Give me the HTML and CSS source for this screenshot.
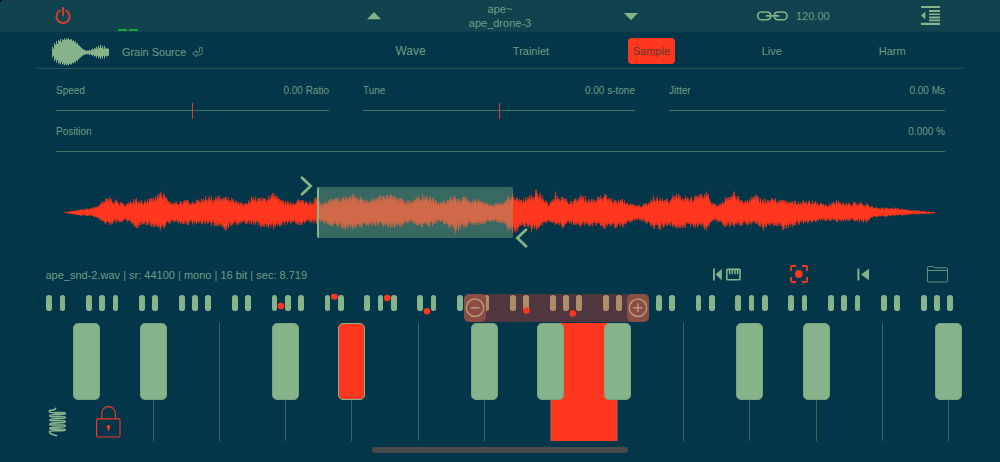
FILE: index.html
```
<!DOCTYPE html>
<html lang="en">
<head>

    <meta charset="utf-8">

    <title>Grain Source</title>

    <link rel="stylesheet" href="styles.css">

</head>
<body>

    <header class="topbar">
        <svg class="power" width="16" height="18" viewBox="0 0 16 18">
            <path d="M5 3.6A6.6 6.6 0 1 0 11 3.6M8 0.5V8.3"/>
        </svg>
        <div class="meter"><i></i><i></i></div>
        <svg class="prev" width="14" height="8" viewBox="0 0 14 8"><path d="M0 7.2L7 0L14 7.2Z"/></svg>
        <div class="preset">ape~<br>ape_drone-3</div>
        <svg class="next" width="14" height="8" viewBox="0 0 14 8"><path d="M0 0H14L7 7.2Z"/></svg>
        <svg class="link" width="31" height="10" viewBox="0 0 31 10">
            <path d="M13.5 3.2C13 1.6 11.6 1 10 1H4.6A3.8 3.8 0 0 0 4.6 8.8H10C11.6 8.8 13 8 13.5 6.6M17.5 3.2C18 1.6 19.4 1 21 1H26.2A3.8 3.8 0 0 1 26.2 8.8H21C19.4 8.8 18 8 17.5 6.6M9.5 4.9H21.5"/>
        </svg>
        <div class="tempo">120.00</div>
        <svg class="menu" width="19" height="19" viewBox="0 0 19 19">
            <path d="M0 0H19V2H0ZM8 4.1H19V6.1H8ZM8 7.4H19V9.1H8ZM8 10.5H19V12.4H8ZM8 13.6H19V15.2H8ZM0 16.8H19V19H0ZM0 9.4L4.3 5.7V13.3Z"/>
        </svg>
    </header>

    <nav class="tabs">
        <svg class="source-icon" id="source_icon" width="58" height="28" viewBox="0 0 58 28"></svg>
        <div class="source">Grain Source
            <svg width="11" height="11" viewBox="0 0 11 11">
                <path d="M7.6 0.6H10.2V5.4Q10.2 7.8 7.8 7.8H4.6V9.8L0.6 6.6L4.6 3.6V5.4H6.6Q7.6 5.4 7.6 4.4Z"/>
            </svg>
        </div>
        <div class="tab-list">
            <span class="wave">Wave</span>
            <span>Trainlet</span>
            <span class="active"><b>Sample</b></span>
            <span>Live</span>
            <span>Harm</span>
        </div>
    </nav>

    <section class="params">
        <div class="param">
            <div class="label"><span>Speed</span><span>0.00 Ratio</span></div>
            <div class="track"><i></i></div>
        </div>
        <div class="param">
            <div class="label"><span>Tune</span><span>0.00 s-tone</span></div>
            <div class="track"><i></i></div>
        </div>
        <div class="param">
            <div class="label"><span>Jitter</span><span>0.00 Ms</span></div>
            <div class="track"></div>
        </div>
        <div class="param wide">
            <div class="label"><span>Position</span><span>0.000 %</span></div>
            <div class="track"></div>
        </div>
    </section>

    <section class="sample">
        <svg id="waveform" width="1000" height="84" viewBox="0 171 1000 84"></svg>
        <div class="selection"></div>
        <svg class="handle start" width="13" height="20" viewBox="0 0 13 20"><path d="M2 1.8L10.6 10L2 18.2"/></svg>
        <svg class="handle end" width="13" height="20" viewBox="0 0 13 20"><path d="M11 1.8L2.4 10L11 18.2"/></svg>
    </section>

    <section class="info">
        <div class="file">ape_snd-2.wav | sr: 44100 | mono | 16 bit | sec: 8.719</div>
        <svg class="key-start" width="28" height="13" viewBox="0 0 28 13">
            <path d="M0 0.5H1.8V12.5H0ZM8.8 0.8V12.2L2.6 6.5Z"/>
            <path fill-rule="evenodd" d="M14.6 0.5H26.2Q27.8 0.5 27.8 2V11Q27.8 12.5 26.2 12.5H14.6Q13 12.5 13 11V2Q13 0.5 14.6 0.5ZM14.6 2.2V10.9H26.2V2.2H25.3V6.3H23.8V2.2H22.7V6.3H21.2V2.2H20V6.3H18.5V2.2H17.4V6.3H15.9V2.2Z"/>
        </svg>
        <svg class="record" width="18" height="18" viewBox="0 0 18 18">
            <path d="M1 6V2.2Q1 1 2.2 1H6M12 1H15.8Q17 1 17 2.2V6M17 12V15.8Q17 17 15.8 17H12M6 17H2.2Q1 17 1 15.8V12"/>
            <circle cx="8.8" cy="9" r="3.9"/>
        </svg>
        <svg class="to-start" width="13" height="13" viewBox="0 0 13 13">
            <path d="M0.4 0.5H2.4V12.5H0.4ZM12 0.8V12.2L4 6.5Z"/>
        </svg>
        <svg class="folder" width="22" height="17" viewBox="0 0 22 17">
            <path d="M0.5 15V1.5Q0.5 0.5 1.5 0.5H6.3L8 1.8H19.5Q20.5 1.8 20.5 2.8V15Q20.5 16 19.5 16H1.5Q0.5 16 0.5 15ZM0.5 4.5H20.5"/>
        </svg>
    </section>

    <section class="minimap">
        <div class="pills" id="pills"></div>
        <div class="range">
            <svg width="22" height="27" viewBox="0 0 22 27"><circle cx="11" cy="13.5" r="8.7"/><path d="M6.4 13.5H15.6"/></svg>
            <svg width="22" height="27" viewBox="0 0 22 27"><circle cx="11" cy="13.5" r="8.7"/><path d="M6.4 13.5H15.6M11 8.9V18.1"/></svg>
        </div>
        <svg class="notes" id="notes" width="1000" height="28" viewBox="0 294 1000 28"></svg>
    </section>

    <section class="keyboard" id="keyboard">
        <svg class="spring" width="20" height="30" viewBox="0 0 20 30">
            <path d="M7.6 1.2Q7.2 3.4 3.8 3.3Q0.8 3 1.4 4.8C2 7 16 4.3 17.4 6.2C18 8.3 2 6.5 1.8 8.8C1.8 11 17.2 8.3 17.4 10.4C17.4 12.4 1.8 10.8 1.8 12.9C1.8 15 17.4 12.5 17.4 14.7C17.4 16.8 1.8 15 1.8 17.2C1.8 19.3 17.4 16.8 17.4 18.9C17.4 21 1.8 19.2 1.8 21.2C1.8 23.3 17.2 21 17.4 22.8C16.8 24.8 3.4 22.8 1.6 24.3C0.8 27 5 27.8 8.6 28.6"/>
        </svg>
        <svg class="lock" width="25" height="32" viewBox="0 0 25 32">
            <path d="M2 12.8H22.6Q24 12.8 24 14.2V29.6Q24 31 22.6 31H2Q0.6 31 0.6 29.6V14.2Q0.6 12.8 2 12.8ZM5.8 12.6V7.6A6.6 6.8 0 0 1 19.4 7.6V12.6"/>
            <path class="hole" d="M12.5 19A1.8 1.8 0 0 1 13.4 22.4L13 25H12L11.6 22.4A1.8 1.8 0 0 1 12.5 19Z"/>
        </svg>
    </section>

    <div class="home"></div>

    <script src="script.js"></script>

</body>
</html>
```

FILE: styles.css
```
html, body {
    width: 1000px;
    height: 462px;
    margin: 0;
    overflow: hidden;
}
html {
    background: #000;
}
body {
    display: flex;
    flex-direction: column;
    border-top-left-radius: 4px;
    background: #033649;
    color: #6f9d83;
    font-family: "Liberation Sans", Helvetica, Arial, sans-serif;
    font-size: 11px;
    line-height: 14px;
}
svg {
    display: block;
    flex: none;
    fill: none;
}

/* top bar */
.topbar {
    display: flex;
    align-items: center;
    box-sizing: border-box;
    height: 32px;
    padding-left: 54px;
    background: #11434f;
    border-bottom: 1px solid #0d404e;
    border-top-left-radius: 4px;
    flex: none;
}
.power {
    margin-left: 0.6px;
    stroke: #f03a28;
    stroke-width: 1.7;
    stroke-linecap: round;
}
.meter {
    display: flex;
    gap: 2px;
    align-self: flex-end;
    width: 21px;
    margin-left: 47.4px;
}
.meter i {
    width: 9px;
    height: 2px;
    background: #16a52e;
}
.prev, .next, .menu, .key-start, .to-start {
    fill: #87b38a;
}
.prev {
    margin-left: 228px;
}
.preset {
    width: 120px;
    margin: 1px 0 0 59px;
    text-align: center;
}
.next {
    margin: 2px 0 0 64px;
}
.link {
    margin-left: 119px;
    stroke: #87b38a;
    stroke-width: 1.6;
    stroke-linecap: round;
}
.tempo {
    width: 36px;
    margin: 1px 0 0 8px;
}
.menu {
    margin-left: 89px;
}

/* source tabs */
.tabs {
    display: flex;
    align-items: center;
    box-sizing: border-box;
    height: 37px;
    margin: 0 37px;
    padding: 4px 0 0 15px;
    border-bottom: 1px solid #245752;
    flex: none;
}
.source-icon {
    stroke: #87b38a;
}
.source {
    display: flex;
    gap: 6px;
    align-items: center;
    width: 200px;
    margin: 0 0 0 12px;
    letter-spacing: -0.05px;
}
.source svg {
    stroke: #6f9d83;
    stroke-width: 0.8;
}
.tab-list {
    display: grid;
    grid-template-columns: repeat(5, 120.4px);
    margin: -2px 0 0 28.4px;
    text-align: center;
    align-items: center;
}
.tab-list .wave {
    font-size: 12px;
}
.tab-list b {
    display: inline-block;
    width: 47px;
    border-radius: 4px;
    background: #ff371e;
    color: #5f3634;
    font-weight: normal;
    line-height: 26px;
}

/* parameters */
.params {
    display: grid;
    grid-template-columns: 273px 272px 276px;
    align-content: start;
    justify-content: space-between;
    row-gap: 13px;
    height: 87px;
    padding: 14px 55px 0 56px;
    font-size: 10px;
    flex: none;
}
.params .wide {
    grid-column: 1 / 4;
}
.label {
    display: flex;
    justify-content: space-between;
    padding-top: 1px;
}
.track {
    display: flex;
    align-items: center;
    justify-content: center;
    height: 1px;
    margin-top: 12px;
    background: #41735f;
}
.track i {
    width: 1px;
    height: 16px;
    background: #e8392a;
    flex: none;
}

/* waveform */
.sample {
    position: relative;
    margin-top: 1px;
    height: 84px;
    flex: none;
}
#waveform {
    stroke: #ff371e;
}
.selection {
    position: absolute;
    box-sizing: border-box;
    left: 317px;
    top: 16px;
    width: 196px;
    height: 51px;
    border-left: 2px solid #87b38a;
    border-radius: 2px;
    background: rgba(135, 179, 138, 0.4);
}
.handle {
    position: absolute;
    stroke: #87b38a;
    stroke-width: 2.8;
    stroke-linecap: round;
}
.start {
    left: 300px;
    top: 5px;
}
.end {
    left: 515px;
    top: 57px;
}

/* file info */
.info {
    display: flex;
    align-items: center;
    height: 38px;
    padding-left: 45.5px;
    flex: none;
}
.file {
    width: 667.5px;
    margin-top: 1px;
}
.record {
    margin-left: 49px;
    stroke: #ff371e;
    stroke-width: 1.8;
}
.record circle {
    fill: #ff371e;
    stroke: none;
}
.to-start {
    margin-left: 49px;
}
.folder {
    margin: 0 0 0 57px;
    stroke: #629078;
}

/* overview keyboard */
.minimap {
    position: relative;
    height: 30px;
    margin-top: 1px;
    flex: none;
}
.pills {
    display: grid;
    grid-template-columns: repeat(69, 13.26px);
    justify-items: center;
    padding: 1px 0 0 42.6px;
}
.pills i {
    width: 5.6px;
    height: 16px;
    border-radius: 2.8px;
    background: #87b38a;
}
.pills .none {
    visibility: hidden;
}
.pills .in-range {
    position: relative;
    z-index: 1;
    background: #ad8e68;
}
.range {
    position: absolute;
    display: flex;
    justify-content: space-between;
    left: 463.5px;
    top: 0;
    width: 185.5px;
    height: 27.5px;
    border-radius: 5px;
    background: #50363f;
}
.range svg {
    position: relative;
    z-index: 2;
    height: 27.5px;
    border-radius: 5px;
    background: #8a4c44;
    stroke: #b39a70;
    stroke-width: 1.5;
}
.notes {
    position: absolute;
    z-index: 2;
    left: 0;
    top: 0;
    fill: #ff371e;
}

/* keys */
.keyboard {
    position: relative;
    display: grid;
    grid-template-columns: repeat(15, 66.3px);
    height: 118px;
    margin: -1px 0 0 21px;
    flex: none;
}
.key {
    position: relative;
    box-sizing: border-box;
    border-right: 1px solid #39695f;
}
.key.first {
    border-color: transparent;
}
.key.pressed {
    background: #ff371e;
}
.key i {
    position: absolute;
    z-index: 1;
    right: -14px;
    top: 0;
    box-sizing: border-box;
    width: 27px;
    height: 77px;
    border: 1px solid #78a582;
    border-radius: 5px;
    background: #87b38a;
}
.key i.pressed {
    border-color: #87b38a;
    background: #ff371e;
}
.spring, .lock {
    position: absolute;
    z-index: 2;
}
.spring {
    left: 26.6px;
    top: 84px;
    stroke: #87b38a;
    stroke-width: 1.6;
    stroke-linecap: round;
}
.lock {
    left: 75px;
    top: 83px;
    stroke: #e8392a;
    stroke-width: 1.2;
}
.lock .hole {
    fill: #ff371e;
    stroke: none;
}

.home {
    width: 256px;
    height: 6px;
    margin: 6px auto 0;
    border-radius: 3px;
    background: #4b4b4d;
    flex: none;
}
```

FILE: script.js
```
// peaks of the sample: x, height above, height below
const PEAKS = [
    [65, 0.5, 0.5], [80, 3, 3], [93, 5, 4], [100, 9, 8], [105, 13, 11], [109, 15, 12], [116, 12, 10],
    [120, 10, 9], [127, 9, 9], [133, 13, 12], [136, 14, 15], [141, 12, 12], [147, 13, 12], [153, 14, 14],
    [160, 20, 17], [164, 17, 14], [170, 10, 10], [180, 11, 11], [187, 12, 12], [196, 12, 11], [205, 16, 11],
    [211, 15, 13], [219, 16, 13], [225, 15, 17], [231, 14, 12], [238, 10, 12], [246, 9, 11], [251, 16, 11],
    [260, 14, 14], [268, 16, 15], [273, 19, 16], [279, 13, 13], [290, 10, 11], [298, 13, 12], [310, 11, 10],
    [316, 15, 11], [320, 9, 9], [330, 13, 13], [345, 16, 16], [352, 18, 16], [361, 15, 15], [371, 14, 13],
    [382, 16, 13], [390, 18, 15], [400, 14, 14], [408, 12, 10], [422, 18, 14], [432, 14, 13], [440, 10, 9],
    [450, 15, 15], [455, 15, 20], [465, 15, 14], [478, 13, 12], [490, 8, 9], [500, 10, 10], [508, 16, 17],
    [512, 19, 20], [517, 14, 18], [525, 15, 13], [531, 17, 19], [536, 22, 17], [542, 16, 12], [549, 8, 9],
    [555, 20, 12], [562, 15, 15], [571, 11, 11], [580, 17, 14], [592, 13, 13], [604, 18, 15], [615, 12, 15],
    [622, 13, 14], [630, 9, 9], [637, 7, 7], [645, 9, 10], [653, 16, 15], [660, 14, 16], [666, 13, 13],
    [676, 18, 15], [685, 16, 15], [697, 16, 14], [706, 20, 17], [713, 9, 8], [718, 8, 9], [725, 15, 14],
    [734, 20, 14], [742, 11, 12], [755, 17, 11], [763, 13, 17], [775, 14, 12], [783, 12, 17], [795, 11, 12],
    [803, 12, 11], [815, 11, 9], [825, 8, 8], [836, 12, 9], [845, 9, 8], [853, 10, 8], [866, 9, 10],
    [872, 6, 5], [885, 5, 4], [895, 5, 3], [905, 3, 2.5], [918, 2, 1.5], [928, 1, 1], [935, 0.5, 0.5]
];

// small source icon, one value per column
const ICON = [6, 4, 10, 8, 12, 9, 13, 12, 14, 11, 14, 13, 15, 13, 15, 14, 15, 13, 14, 14, 12, 13, 11, 12, 9, 10, 8, 7,
    6, 5, 4, 3, 3, 2, 2, 2, 2, 3, 2, 3, 4, 3, 5, 4, 6, 4, 7, 5, 8, 5, 7, 4, 7, 4, 5, 4, 4];

const NOTES = [[281, 306], [334.4, 296.5], [387.3, 298], [427, 311.3], [526.5, 310.5], [572.7, 313.5]];
const BLACK = [0, 1, 3, 4, 6, 7, 8, 10, 11, 13];

var seed = 7;

function random()
{
    seed = (seed * 16807) % 2147483647;
    return seed / 2147483647;
}

function drawWaveform()
{
    var core = '';
    var edge = '';
    for (var i = 0; i < PEAKS.length - 1; i++)
    {
        var a = PEAKS[i];
        var b = PEAKS[i + 1];
        for (var x = a[0]; x < b[0]; x++)
        {
            var t = (x - a[0]) / (b[0] - a[0]);
            var up = a[1] + (b[1] - a[1]) * t;
            var down = a[2] + (b[2] - a[2]) * t;
            var r = (x === a[0]) ? 1.05 : 0.72 + random() * 0.36;
            var s = (x === a[0]) ? 1.05 : 0.72 + random() * 0.36;
            edge += 'M' + (x + 0.5) + ' ' + (212.6 - up * r).toFixed(1) + 'V' + (212.6 + down * s).toFixed(1);
            core += 'M' + (x + 0.5) + ' ' + (212.6 - up * r * 0.8).toFixed(1) + 'V' + (212.6 + down * s * 0.8).toFixed(1);
        }
    }
    document.getElementById('waveform').innerHTML = '<path opacity="0.75" stroke-width="1.2" d="' + edge + '"/><path stroke-width="1.2" d="' + core + '"/>';
}

function drawIcon()
{
    var d = '';
    ICON.forEach(function(h, i)
    {
        d += 'M' + (i + 0.5) + ' ' + (14.5 - h * 0.95) + 'V' + (14.5 + h * 0.85);
    });
    document.getElementById('source_icon').innerHTML = '<path d="' + d + '"/>';
}

function drawMinimap()
{
    var html = '';
    for (var k = 0; k < 69; k++)
    {
        var name = (k % 7 === 2 || k % 7 === 6) ? 'none' : (k > 31 && k < 45) ? 'in-range' : '';
        html += '<i class="' + name + '"></i>';
    }
    document.getElementById('pills').innerHTML = html;
    document.getElementById('notes').innerHTML = NOTES.map(function(n)
    {
        return '<circle cx="' + n[0] + '" cy="' + n[1] + '" r="3.3"/>';
    }).join('');
}

function drawKeyboard()
{
    var html = '';
    for (var k = 0; k < 15; k++)
    {
        var name = (k === 0) ? 'key first' : (k === 8) ? 'key pressed' : 'key';
        html += '<div class="' + name + '">';
        if (BLACK.includes(k))
        {
            html += (k === 4) ? '<i class="pressed"></i>' : '<i></i>';
        }
        html += '</div>';
    }
    document.getElementById('keyboard').insertAdjacentHTML('afterbegin', html);
}

drawWaveform();
drawIcon();
drawMinimap();
drawKeyboard();
```
